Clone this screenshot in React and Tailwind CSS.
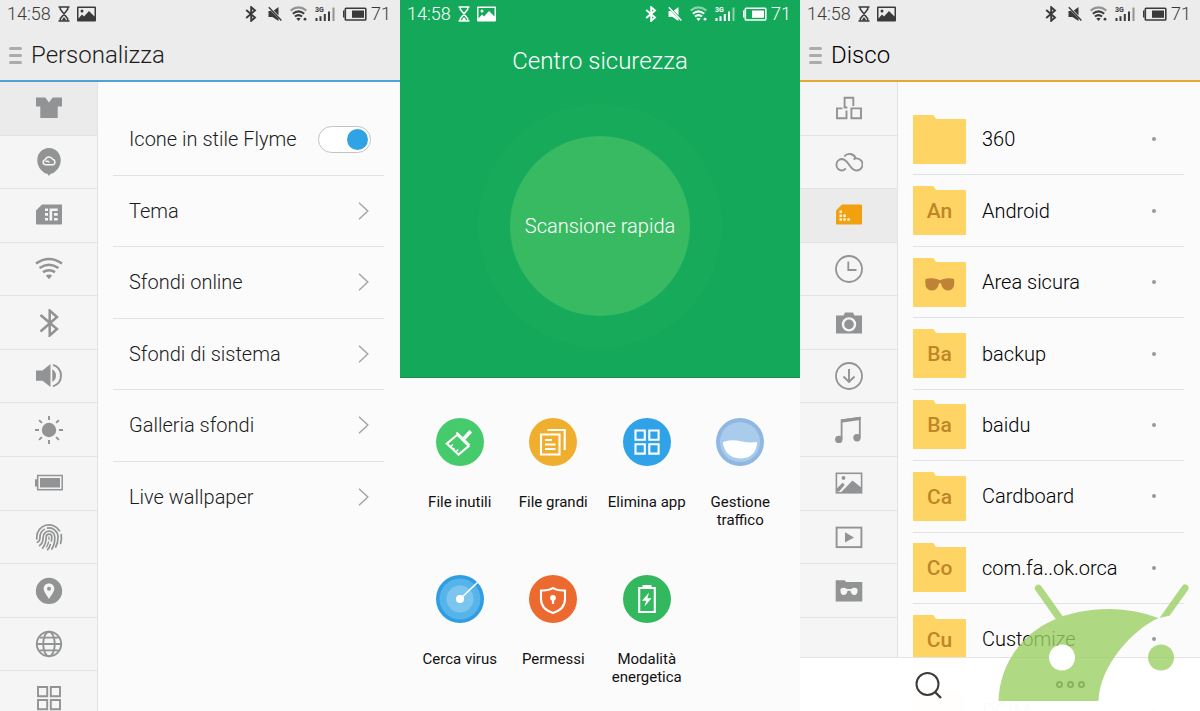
import React from "react";

function StatusBar({ className }) {
  return (
    <div className={`flex h-7 shrink-0 items-center justify-between pl-[7px] pr-[9px] text-lg font-light ${className}`}>
      <div className="flex items-center">
        <span className="w-[51px]">14:58</span>
        <svg className="h-4 w-3" viewBox="0 0 12 16" fill="none" stroke="currentColor" strokeWidth="1.5" aria-hidden="true">
          <path d="M0.5 1H11.5M0.5 15H11.5M2.3 1V3.2L9.7 12.8V15M9.7 1V3.2L2.3 12.8V15" />
          <path d="M3.5 14.5L6 11L8.5 14.5z" fill="currentColor" stroke="none" />
        </svg>
        <svg className="ml-[7px] h-4 w-[19px]" viewBox="0 0 19 16" fill="currentColor" aria-hidden="true">
          <path fillRule="evenodd" d="M1 0.5H18Q19 0.5 19 1.5V14.5Q19 15.5 18 15.5H1Q0 15.5 0 14.5V1.5Q0 0.5 1 0.5zM1.5 2V12.5L5 8.5L7 10.5L12 5L17.5 10.5V2z" />
          <circle cx="5" cy="5" r="1.5" />
        </svg>
      </div>
      <div className="flex items-center">
        <svg className="h-4 w-3" viewBox="0 0 12 16" fill="none" stroke="currentColor" strokeWidth="1.9" aria-hidden="true">
          <path d="M1.2 4L10 11.6L6.2 14.8V1.2L10 4.4L1.2 12" />
        </svg>
        <svg className="ml-[11px] h-4 w-[14px]" viewBox="0 0 14 16" fill="currentColor" aria-hidden="true">
          <path d="M0.5 5H3L10.5 12.5V15L4.5 11H0.5zM10.5 1V9.5L5.8 4.6z" />
          <path d="M0.8 1.3L13.4 14.6" fill="none" stroke="currentColor" strokeWidth="1.4" />
        </svg>
        <svg className="ml-[8px] h-4 w-[17px]" viewBox="0 0 17 16" fill="none" stroke="currentColor" strokeWidth="2" aria-hidden="true">
          <path d="M0.6 4.6Q8.5 -1.8 16.4 4.6" opacity="0.5" />
          <path d="M2.8 7.7Q8.5 3 14.2 7.7M4.9 10.6Q8.5 7.6 12.1 10.6" />
          <path d="M6.3 12.6Q8.5 11 10.7 12.6L8.5 15z" fill="currentColor" stroke="none" />
          <circle cx="15" cy="13.2" r="1.4" fill="currentColor" stroke="none" />
        </svg>
        <svg className="ml-[8px] h-4 w-5" viewBox="0 0 20 16" fill="currentColor" aria-hidden="true">
          <text x="0" y="5.6" fontSize="7" fontWeight="700" fontFamily="Roboto, sans-serif">3G</text>
          <path d="M0.5 12H2.5V15H0.5zM4.5 10.2H6.5V15H4.5zM8.8 8H10.8V15H8.8zM13 5.5H15V15H13z" />
          <path d="M17.5 1.5H19.5V15H17.5z" opacity="0.5" />
        </svg>
        <svg className="ml-[8px] h-4 w-6" viewBox="0 0 24 16" fill="currentColor" aria-hidden="true">
          <path d="M0 4.5H1.5V11.5H0z" />
          <rect x="2.3" y="2.2" width="20.5" height="11.8" rx="0.8" fill="none" stroke="currentColor" strokeWidth="1.6" />
          <path d="M9 4.5H21V11.8H9z" />
        </svg>
        <span className="w-6 text-right">71</span>
      </div>
    </div>
  );
}

function Icon({ children, className = "" }) {
  return (
    <svg className={`size-7 ${className}`} viewBox="0 0 28 28" fill="currentColor" aria-hidden="true">
      {children}
    </svg>
  );
}

const line = { fill: "none", stroke: "currentColor", strokeWidth: 1.9 };

const settingsTabs = [
  ["Personalizza", <Icon><path d="M1 3.5H10.3L14 8.5L17.7 3.5H27V12.5H22.7V24H5.3V12.5H1z" /></Icon>],
  ["Account", (
    <Icon>
      <path d="M14 0C7.4 0 2.3 5 2.3 12C2.3 18 5.5 22 9.5 25L12.6 26L14 28L15.4 26L18.5 25C22.5 22 25.7 18 25.7 12C25.7 5 20.6 0 14 0z" />
      <path d="M10.3 16.8A2.6 2.6 0 0 1 10.2 11.7A4 4 0 0 1 17.6 11.2A2.9 2.9 0 0 1 18 16.8zM10.5 13.8A2.3 2.3 0 0 1 14.2 14.5" fill="none" stroke="#f5f5f5" strokeWidth="1.5" />
    </Icon>
  )],
  ["SIM", (
    <Icon>
      <path d="M7 3.5H26.3Q27 3.5 27 4.2V22.7Q27 23.5 26.3 23.5H1.7Q1 23.5 1 22.7V9.5z" />
      <path d="M10 7.5H13V10H10zM10 12H13V14.8H10zM10 17H13V19.5H10zM14.5 7.5H22.7V10H17.2V19.5H14.5zM19 12H22.7V14.8H19zM19 17H22.7V19.5H19z" fill="#f5f5f5" />
    </Icon>
  )],
  ["Wi-Fi", (
    <Icon>
      <path d="M1 8.5Q14 -0.5 27 8.5M4.5 13Q14 6.5 23.5 13M8 17.2Q14 13.2 20 17.2" {...line} strokeWidth="2.6" />
      <path d="M10.8 20.6Q14 18.6 17.2 20.6L14 24.3z" />
    </Icon>
  )],
  ["Bluetooth", <Icon><path d="M5.5 6L22 20L14.7 26.5V1.5L22 8L5.5 22.5" {...line} strokeWidth="2.5" /></Icon>],
  ["Audio", (
    <Icon>
      <path d="M1 8.5H7.5L15.5 2V25L7.5 18.7H1zM17.3 7.2Q21 9.5 21 13.6Q21 17.7 17.3 20z" />
      <path d="M18 2.8Q26 5.5 26 13.6Q26 21.7 18 24.4" {...line} />
    </Icon>
  )],
  ["Luminosità", (
    <Icon>
      <circle cx="14" cy="14" r="7.2" />
      <path d="M14 0V4M14 24V28M0 14H4M24 14H28M4.1 4.1L6.9 6.9M21.1 21.1L23.9 23.9M4.1 23.9L6.9 21.1M21.1 6.9L23.9 4.1" {...line} />
    </Icon>
  )],
  ["Batteria", (
    <Icon>
      <path d="M0 10.3H2V17.6H0zM5 9H25V18.5H5z" />
      <rect x="2.7" y="6.5" width="24.5" height="14.2" {...line} strokeWidth="1.5" />
    </Icon>
  )],
  ["Impronte", (
    <Icon>
      <g {...line} strokeWidth="1.7" strokeLinecap="round">
        <path d="M1.8 16V14A12.2 12.2 0 0 1 24.5 7.8M26.2 11.5Q26.9 16 25.6 20.5" />
        <path d="M2.3 19.3Q5 18.5 5 14A9 9 0 0 1 9.3 6.4M12.5 5.1A9 9 0 0 1 23 14Q23 20 20.7 24" />
        <path d="M4.5 22.6Q8.2 20 8.2 14A5.8 5.8 0 0 1 19.8 14Q20 21 16.8 26" />
        <path d="M7.6 25.2Q11.2 20.5 11.2 14A2.8 2.8 0 0 1 16.8 14Q16.8 16 16.4 18M15.4 21.5Q14.5 24.5 12.6 26.6" />
        <path d="M14 14V16.5M13.6 19Q12.8 22 11.5 24" strokeWidth="1.3" />
      </g>
    </Icon>
  )],
  ["Posizione", (
    <Icon>
      <path fillRule="evenodd" d="M14 0.8A13.1 13.1 0 1 0 14 27.1A13.1 13.1 0 1 0 14 0.8zM14 6.5C17.2 6.5 19.3 8.7 19.3 11.7C19.3 15.3 15.2 19.2 14 22C12.8 19.2 8.7 15.3 8.7 11.7C8.7 8.7 10.8 6.5 14 6.5z" />
      <circle cx="14" cy="11.7" r="2" />
    </Icon>
  )],
  ["Lingua", (
    <Icon>
      <g {...line} strokeWidth="1.9">
        <circle cx="14" cy="14" r="12.2" />
        <ellipse cx="14" cy="14" rx="5.8" ry="12.2" />
        <path d="M4.5 7.6H23.5M2 14H26M4.5 20.4H23.5" />
      </g>
    </Icon>
  )],
  ["Altro", <Icon><path d="M3 3H12.2V12.2H3zM15.8 3H25V12.2H15.8zM3 16H12.2V25.2H3zM15.8 16H25V25.2H15.8z" {...line} /></Icon>],
];

const diskTabs = [
  ["Tutti", (
    <Icon>
      <path d="M9.6 9.5V3.8H18.3V12M9.6 9.5V13.5H12.4M7.4 14.4H2V24.2H11.5V16.5M16.4 14.4H26V24.2H16.4z" {...line} />
    </Icon>
  )],
  ["Cloud", (
    <Icon>
      <path d="M10.8 20.3Q8.8 22.5 6.5 22.5A5.8 5.8 0 0 1 6.5 11C10.5 11 12.5 14.5 14.5 17.3Q18 22.5 21.2 22.5A6 6 0 0 0 21.8 10.4Q20 10.2 18.6 11.5M9.3 8.5A6.6 6.6 0 0 1 20.7 10.2" {...line} />
    </Icon>
  )],
  ["Memoria", (
    <Icon className="text-[#f1a010]">
      <path d="M7 3.5H26.3Q27 3.5 27 4.2V22.7Q27 23.5 26.3 23.5H1.7Q1 23.5 1 22.7V9.5z" />
      <path d="M4.5 9.5H7V12H4.5zM4.5 13.4H7V15.9H4.5zM8.3 13.4H10.8V15.9H8.3zM4.5 17.3H7V19.8H4.5zM8.3 17.3H10.8V19.8H8.3zM12.3 17.3H14.8V19.8H12.3z" fill="#fff3d8" />
    </Icon>
  )],
  ["Recenti", <Icon><circle cx="14" cy="14" r="13" {...line} strokeWidth="1.8" /><path d="M13.3 6.5V15H21.5" {...line} strokeWidth="1.8" /></Icon>],
  ["Foto", (
    <Icon>
      <path fillRule="evenodd" d="M1 6.5H8.5L10 3.5H18L19.5 6.5H27V24.5H1zM14 8.2A7.2 7.2 0 1 0 14 22.6A7.2 7.2 0 1 0 14 8.2z" />
      <circle cx="14" cy="15.4" r="4.8" />
    </Icon>
  )],
  ["Download", <Icon><circle cx="14" cy="14" r="13" {...line} strokeWidth="1.8" /><path d="M14 7V19.5M8.5 14.5L14 20L19.5 14.5" {...line} /></Icon>],
  ["Musica", (
    <Icon>
      <circle cx="3.8" cy="23.4" r="3.7" />
      <circle cx="22" cy="21.8" r="3.7" />
      <path d="M6.6 23V4.3L24.8 1.8V21.5" {...line} strokeWidth="1.8" />
      <path d="M6 3.5L25.6 0.7V4L6 6.8z" />
    </Icon>
  )],
  ["Immagini", (
    <Icon>
      <rect x="1.4" y="4.3" width="25.2" height="19.5" {...line} strokeWidth="1.6" />
      <circle cx="8.5" cy="8.9" r="1.9" />
      <path d="M2 19.3L7.5 13.8L9.8 15.8L4.5 22.3L2 22.8zM6 23.3L17.5 11.5L26.5 18.8V23.3z" />
    </Icon>
  )],
  ["Video", <Icon><rect x="1.6" y="4.6" width="24.8" height="19.5" {...line} /><path d="M10 9.2L19 14.4L10 19.6z" /></Icon>],
  ["Privati", (
    <Icon>
      <path d="M0.7 3.3H9.8L11 5H27.3V24.5H0.7z" />
      <path d="M5.5 12Q8.5 9.5 12 12H16Q19.5 9.5 22.5 12Q23 18 19.2 18Q16.5 18 15.4 13.7H12.6Q11.5 18 8.8 18Q5 18 5.5 12z" fill="#f5f5f5" />
    </Icon>
  )],
  ["", null],
  ["", null],
];

function SideTabs({ items, selected, label }) {
  return (
    <nav aria-label={label} className="w-[98px] shrink-0 overflow-hidden border-r border-[#e2e2e2] bg-[#f5f5f5]">
      <div className="grid h-[643px] grid-rows-12">
        {items.map(([name, icon], i) =>
          icon ? (
            <button
              key={i}
              aria-label={name}
              className={`flex items-center justify-center border-b border-[#e2e2e2] text-[#929394] ${i === selected ? "bg-[#ebebeb]" : ""}`}
            >
              {icon}
            </button>
          ) : (
            <div key={i} />
          )
        )}
      </div>
    </nav>
  );
}

function Header({ title, accent }) {
  return (
    <header className={`flex h-[82px] shrink-0 flex-col border-b-2 bg-[#ececec] ${accent}`}>
      <StatusBar className="text-[#3a3a3a]" />
      <div className="flex flex-1 items-center gap-[9px] pl-[9px] pt-[2px]">
        <button aria-label="Menu" className="flex w-[13px] flex-col gap-1">
          <span className="h-[3px] rounded-full bg-[#ababab]" />
          <span className="h-[3px] rounded-full bg-[#ababab]" />
          <span className="h-[3px] rounded-full bg-[#ababab]" />
        </button>
        <h1 className="text-2xl">{title}</h1>
      </div>
    </header>
  );
}

const links = ["Tema", "Sfondi online", "Sfondi di sistema", "Galleria sfondi", "Live wallpaper"];

function Personalize() {
  return (
    <section className="flex min-h-0 min-w-0 flex-col bg-[#fbfbfb]">
      <Header title="Personalizza" accent="border-[#4ba3d6] text-[#1c1c1c] font-[350]" />
      <div className="flex min-h-0 flex-1">
        <SideTabs items={settingsTabs} selected={0} label="Impostazioni" />
        <ul className="mt-[22px] grid h-[429px] min-w-0 flex-1 grid-cols-1 grid-rows-6 pl-[15px] pr-4 text-xl font-light text-[#1c1c1c]">
          <li className="border-b border-[#e2e2e2]">
            <label className="flex h-full items-center justify-between pl-4 pr-[13px]">
              Icone in stile Flyme
              <input
                type="checkbox"
                defaultChecked
                className="flex h-[27px] w-[53px] appearance-none items-center rounded-full border border-[#c3c3c3] bg-white px-[2px] before:size-[21px] before:rounded-full before:bg-[#ddd] checked:justify-end checked:before:bg-[#30a3e6]"
              />
            </label>
          </li>
          {links.map((text) => (
            <li key={text} className="border-b border-[#e2e2e2] last:border-0">
              <a href="#" className="flex h-full items-center justify-between pl-4 pr-[15px]">
                {text}
                <svg className="h-[18px] w-[11px]" viewBox="0 0 11 18" fill="none" stroke="#a6a6a6" strokeWidth="1.5" aria-hidden="true">
                  <path d="M1 0.8L9.8 9L1 17.2" />
                </svg>
              </a>
            </li>
          ))}
        </ul>
      </div>
    </section>
  );
}

function Round({ children, fill }) {
  return (
    <svg className="size-12" viewBox="0 0 48 48" fill="none" stroke="#fff" strokeWidth="2.1" aria-hidden="true">
      <circle cx="24" cy="24" r="24" fill={fill} stroke="none" />
      {children}
    </svg>
  );
}

const tools = [
  ["File inutili", (
    <Round fill="#45cb6c">
      <path d="M21.3 16.8L32.6 28.1L22.5 36.5L10.8 25.6zM20.5 14.5L33.5 27.2" />
      <path d="M28 20.5L34.8 13.2" strokeWidth="3.6" />
      <path d="M14 28.8L17 26.5M16.7 31.5L18.5 30M19.7 34L22.3 31.5" strokeWidth="1.5" />
    </Round>
  )],
  ["File grandi", (
    <Round fill="#f0ae2e">
      <path d="M12 16.5H30.5V36.5H12zM18.5 12H35.7V32" />
      <path d="M16 22H23M16 26.5H26.5M16 31H26.5" />
    </Round>
  )],
  ["Elimina app", (
    <Round fill="#2fa2e8">
      <path d="M12.5 12.5H21.8V21.8H12.5zM26.3 12.5H35.6V21.8H26.3zM12.5 26.3H21.8V35.6H12.5zM26.3 26.3H35.6V35.6H26.3z" />
    </Round>
  )],
  ["Gestione traffico", (
    <Round fill="#8fb7e2">
      <circle cx="24" cy="24" r="20" fill="#a9cbec" stroke="none" />
      <path d="M6.8 24.8Q8 23 13 22.4Q19 21.8 26 23.4Q33 25 41.2 24Q40 40.5 24 40.5Q9.5 40 6.8 24.8z" fill="#fff" stroke="none" />
    </Round>
  )],
  ["Cerca virus", (
    <Round fill="#2f9de2">
      <circle cx="24" cy="24" r="20.5" fill="#56b4eb" stroke="none" />
      <circle cx="24" cy="24" r="13.5" fill="#7cc5ef" stroke="none" />
      <path d="M24 24L41.5 7.5" strokeWidth="1.6" />
      <circle cx="24" cy="24" r="4" fill="#fff" stroke="none" />
    </Round>
  )],
  ["Permessi", (
    <Round fill="#ec6a30">
      <path d="M12 15.5Q19.5 16 24 13Q28.5 16 36 15.5V24Q36 34 24 38Q12 34 12 24z" />
      <circle cx="24" cy="22.8" r="2.9" fill="#fff" stroke="none" />
      <path d="M24 23V29" strokeWidth="2.2" />
    </Round>
  )],
  ["Modalità energetica", (
    <Round fill="#33b75f">
      <path d="M16.2 13H31.8V37H16.2z" />
      <path d="M19.5 10H28.5V13.5H19.5zM26 17.5L19 25.7H23.2L21.5 31.5L28.6 23.2H24.5z" fill="#fff" stroke="none" />
    </Round>
  )],
];

function Security() {
  return (
    <section className="flex min-h-0 min-w-0 flex-col bg-[#fbfbfb]">
      <div className="flex h-[378px] shrink-0 flex-col border-b border-[#159150] bg-[#13a85a] text-white">
        <StatusBar className="text-white" />
        <h1 className="mt-[17px] text-center text-2xl font-light">Centro sicurezza</h1>
        <div className="mt-[27px] flex justify-center">
          <div className="flex size-[244px] items-center justify-center rounded-full bg-[#17aa5b]">
            <button className="size-[180px] rounded-full bg-[#38ba62] text-xl font-light">Scansione rapida</button>
          </div>
        </div>
      </div>
      <ul className="grid grid-cols-4 px-[13px] pt-10 text-[15px] leading-[18px] text-[#111]">
        {tools.map(([name, icon]) => (
          <li key={name} className="h-[157px]">
            <button className="flex w-full flex-col items-center gap-[27px]">
              {icon}
              <span className="px-1">{name}</span>
            </button>
          </li>
        ))}
      </ul>
    </section>
  );
}

const folders = [
  ["360", ""],
  ["Android", "An"],
  ["Area sicura", "glasses"],
  ["backup", "Ba"],
  ["baidu", "Ba"],
  ["Cardboard", "Ca"],
  ["com.fa..ok.orca", "Co"],
  ["Customize", "Cu"],
  ["DCIM", ""],
];

function Folder({ mark }) {
  return (
    <span className="mr-4 grid h-[49px] w-[53px] shrink-0 place-items-center text-[21px] font-medium text-[#bf8629]">
      <svg className="col-start-1 row-start-1 h-[49px] w-[53px]" viewBox="0 0 53 49" aria-hidden="true">
        <path d="M0 0.7Q0 0 0.7 0H20.5L23 4H52.3Q53 4 53 4.7V48.3Q53 49 52.3 49H0.7Q0 49 0 48.3z" fill="#fed565" />
        {mark === "glasses" && (
          <path d="M12.5 21Q18 19.3 24.5 21.3L27 22.3L29.5 21.3Q36 19.3 41 21L41.3 24Q41.5 32.5 35 32.5Q31 32.5 29 28.5L28 25.3H26L25 28.5Q23 32.5 19 32.5Q12 32.5 12.3 24z" fill="#bf8338" />
        )}
      </svg>
      {mark !== "glasses" && <span className="col-start-1 row-start-1 pt-[2px]">{mark}</span>}
    </span>
  );
}

function Disk() {
  return (
    <section className="relative flex min-h-0 min-w-0 flex-col overflow-hidden bg-[#fbfbfb]">
      <Header title="Disco" accent="border-[#e2aa35] text-black font-[350]" />
      <div className="flex min-h-0 flex-1">
        <SideTabs items={diskTabs} selected={2} label="Categorie" />
        <ul className="mt-[22px] grid h-[643px] min-w-0 flex-1 grid-cols-1 grid-rows-9 pl-[15px] pr-4 text-xl text-black font-[350]">
          {folders.map(([name, mark]) => (
            <li key={name} className="flex items-center border-b border-[#dfe2e6]">
              <Folder mark={mark} />
              <span className="min-w-0 flex-1 truncate">{name}</span>
              <button aria-label={`Opzioni ${name}`} className="flex w-[60px] justify-center">
                <span className="size-1 rounded-full bg-[#999]" />
              </button>
            </li>
          ))}
        </ul>
      </div>
      <div className="absolute inset-x-0 bottom-0 flex h-[54px] items-center justify-center gap-[114px] border-t border-[#e4e4e4] bg-white/98">
        <button aria-label="Cerca">
          <svg className="h-7 w-[27px]" viewBox="0 0 27 28" fill="none" stroke="#3c3c3c" strokeWidth="2" aria-hidden="true">
            <circle cx="12.5" cy="13" r="11" />
            <path d="M20 21L26 27" strokeWidth="2.4" />
          </svg>
        </button>
        <button aria-label="Altro" className="flex gap-1">
          <span className="size-[7px] rounded-full border-2 border-[#3c3c3c]" />
          <span className="size-[7px] rounded-full border-2 border-[#3c3c3c]" />
          <span className="size-[7px] rounded-full border-2 border-[#3c3c3c]" />
        </button>
      </div>
      <svg className="pointer-events-none absolute bottom-[9px] right-2 h-[120px] w-[196px]" viewBox="0 0 196 120" aria-hidden="true">
        <circle cx="66" cy="75.5" r="13" fill="#fff" />
        <g fill="#9cd064" opacity="0.8">
          <path fillRule="evenodd" d="M2.5 119C4 72 40 27 114 27Q140 27.5 162.5 36C138 47 104 82 102.5 119zM66 62.5A13 13 0 1 0 66 88.5A13 13 0 1 0 66 62.5z" />
          <path d="M62.2 40.5L39.6 8.4A3.4 3.4 0 0 1 45.2 4L68.8 37.2z" />
          <path d="M163.5 36L186 4.2A3.4 3.4 0 0 1 192 8L173.5 33.8Q169 34.5 163.5 36z" />
          <circle cx="165" cy="75.5" r="13" />
        </g>
      </svg>
    </section>
  );
}

export default function App() {
  return (
    <main className="grid h-screen grid-cols-3 overflow-hidden font-[Roboto,sans-serif]">
      <Personalize />
      <Security />
      <Disk />
    </main>
  );
}
